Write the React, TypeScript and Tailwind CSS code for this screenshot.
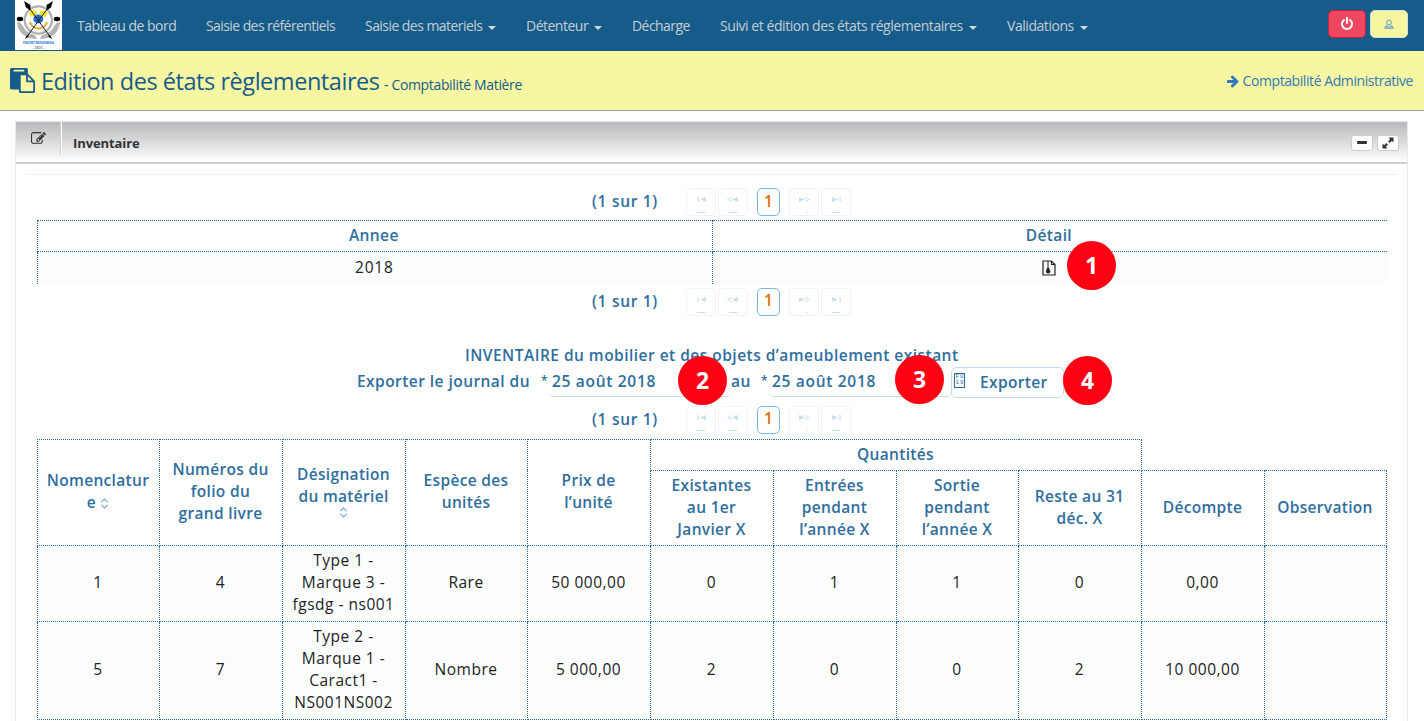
import React from "react";

const PASTE =
  "M768 1664h896v-640h-416q-40 0-68-28t-28-68v-416h-384v1152zm256-1440v-64q0-13-9.5-22.5t-22.5-9.5h-704q-13 0-22.5 9.5t-9.5 22.5v64q0 13 9.5 22.5t22.5 9.5h704q13 0 22.5-9.5t9.5-22.5zm256 672h299l-299-299v299zm512 128v672q0 40-28 68t-68 28h-960q-40 0-68-28t-28-68v-160h-544q-40 0-68-28t-28-68v-1344q0-40 28-68t68-28h1088q40 0 68 28t28 68v328q21 13 36 28l408 408q28 28 48 76t20 88z";
const POWER =
  "M1664 896q0 156-61 298t-164 245-245 164-298 61-298-61-245-164-164-245-61-298q0-182 80.5-343t226.5-270q43-32 95.5-25t83.5 50q32 42 24.5 94.5t-49.5 84.5q-98 74-151.5 181t-53.5 228q0 104 40.5 198.5t109.5 163.5 163.5 109.5 198.5 40.5 198.5-40.5 163.5-109.5 109.5-163.5 40.5-198.5q0-121-53.5-228t-151.5-181q-42-32-49.5-84.5t24.5-94.5q31-43 84-50t95 25q146 109 226.5 270t80.5 343zm-640-768v640q0 52-38 90t-90 38-90-38-38-90v-640q0-52 38-90t90-38 90 38 38 90z";
const EDIT =
  "M888 1184l116-116-152-152-116 116v56h96v96h56zm440-720q-16-16-33 1l-350 350q-17 17-1 33t33-1l350-350q17-17 1-33zm80 594v190q0 119-84.5 203.5t-203.5 84.5h-832q-119 0-203.5-84.5t-84.5-203.5v-832q0-119 84.5-203.5t203.5-84.5h832q63 0 117 25 15 7 18 23 3 17-9 29l-49 49q-14 14-32 8-23-6-45-6h-832q-66 0-113 47t-47 113v832q0 66 47 113t113 47h832q66 0 113-47t47-113v-126q0-13 9-22l64-64q15-15 35-7t20 29zm-96-738l288 288-672 672h-288v-288zm444 132l-92 92-288-288 92-92q28-28 68-28t68 28l152 152q28 28 28 68t-28 68z";
const ARROW =
  "M1600 960q0 54-37 91l-651 651q-39 37-91 37-51 0-90-37l-75-75q-38-38-38-91t38-91l293-293h-704q-52 0-84.5-37.5t-32.5-90.5v-128q0-53 32.5-90.5t84.5-37.5h704l-293-294q-38-36-38-90t38-90l75-75q38-38 90-38 53 0 91 38l651 651q37 35 37 90z";

function Glyph({ d, className }: { d: string; className: string }) {
  return (
    <svg viewBox="0 0 1792 1792" fill="currentColor" className={className}>
      <path d={d} />
    </svg>
  );
}

function Logo() {
  return (
    <svg viewBox="0 0 47 50" className="block h-[50px] w-[47px] bg-white">
      <path d="M2 22 C5 22 7 24 8.500 27 C10.500 31 14 33.500 20 35 L22 39 C12 39 3 34 2 22Z M45 22 C42 22 40 24 38.500 27 C36.500 31 33 33.500 27 35 L25 39 C35 39 44 34 45 22Z" fill="#b4b4b4" />
      <circle cx="23.300" cy="20" r="13.600" fill="#fff" stroke="#b0b0b0" strokeWidth="2.200" />
      <path d="M15 22 A8.800 8.800 0 0 0 32 22" fill="none" stroke="#e0a93c" strokeWidth="2" />
      <path d="M14 13 Q17 9 21.500 11 L22 14.500 L16 17Z M32.600 13 Q29.600 9 25 11 L24.600 14.500 L30.600 17Z" fill="#f1e51c" />
      <ellipse cx="23.300" cy="19" rx="5" ry="4.400" fill="#2a78d6" />
      <path d="M18.800 17.500h9M18.800 20.500h9M23.300 15v8" stroke="#12427d" strokeWidth=".6" />
      <path d="M12 5 L36 38 M35 5 L11 38" stroke="#222" strokeWidth="1" />
      <path d="M9 1 L15.500 5 L15.500 10.500 L11 7.500Z M38 1 L31.500 5 L31.500 10.500 L36 7.500Z M37 39l-4-2.500 2-1.500Z M10 39l4-2.500-2-1.500Z" fill="#090909" />
      <ellipse cx="5" cy="19" rx="3.200" ry="2.200" fill="#000" />
      <ellipse cx="42" cy="19" rx="3.200" ry="2.200" fill="#000" />
      <text x="23.500" y="43.900" textAnchor="middle" fontSize="3.600" fontWeight="700" fill="#3187df" fontFamily="Liberation Sans, sans-serif" textLength="31">FADINTSERANANA</text>
      <text x="23.500" y="48.600" textAnchor="middle" fontSize="3.400" fill="#333" fontFamily="Liberation Sans, sans-serif">- 1820 -</text>
    </svg>
  );
}

const NAV = [
  { label: "Tableau de bord", w: "w-[129px] tracking-[-0.5px]", caret: false },
  { label: "Saisie des référentiels", w: "w-[159px] tracking-[-0.58px]", caret: false },
  { label: "Saisie des materiels", w: "w-[161px] tracking-[-0.55px]", caret: true },
  { label: "Détenteur", w: "w-[106px] tracking-[-0.5px]", caret: true },
  { label: "Décharge", w: "w-[88px] tracking-[-0.55px]", caret: false },
  { label: "Suivi et édition des états réglementaires", w: "w-[287px] tracking-[-0.44px]", caret: true },
  { label: "Validations", w: "w-[111px] tracking-[-0.45px]", caret: true },
];

function PageButton({ kind }: { kind: "first" | "prev" | "next" | "last" }) {
  return (
    <span className="flex h-7 w-[30px] rounded-[5px] border border-[#edf3f9]">
      <svg viewBox="0 0 28 26" className="h-[26px] w-7" fill="#c9dff0" stroke="#c9dff0" strokeWidth="0">
        {kind === "first" && <path d="M10.500 8h1.200v5h-1.200z M19 8v5l-6-2.500z M10 23h8v1h-8z" />}
        {kind === "prev" && (
          <>
            <path d="M19 8v5l-6-2.500z M10 23h8v1h-8z" />
            <path d="M13 8.500L8.500 10.500l4.500 2" fill="none" strokeWidth="1" />
          </>
        )}
        {kind === "next" && (
          <>
            <path d="M9 8v5l6-2.500z M17 23h1v1h-1z" />
            <path d="M15 8.500L19.500 10.500l-4.500 2" fill="none" strokeWidth="1" />
          </>
        )}
        {kind === "last" && <path d="M10 8v5l6-2.500z M17.500 8h1.200v5h-1.200z M10 23h8v1h-8z" />}
      </svg>
    </span>
  );
}

function Paginator() {
  return (
    <div className="ml-[576px] flex h-7 items-center">
      <span className="w-[94px] whitespace-nowrap text-[15.500px] font-semibold tracking-[0.700px] text-[#2e6e9e]">(1 sur 1)</span>
      <PageButton kind="first" />
      <span className="w-0.5" />
      <PageButton kind="prev" />
      <span className="mx-[9px] flex h-7 w-[23px] items-center justify-center rounded-[5px] border border-[#79b7e7] pb-px text-[15.500px] font-semibold text-[#e17009]">
        1
      </span>
      <PageButton kind="next" />
      <span className="w-0.5" />
      <PageButton kind="last" />
    </div>
  );
}

function Sorter() {
  return (
    <svg viewBox="0 0 10 12" className="inline-block h-[11px] w-[9px]" fill="none" stroke="#6fa8d2" strokeWidth="1.200">
      <path d="M1.500 4.500L5 1l3.500 3.500M1.500 7.500L5 11l3.500-3.500" />
    </svg>
  );
}

function Lines({ lines }: { lines: string[] }) {
  return (
    <>
      {lines.map((l) => (
        <span key={l} className="block whitespace-nowrap">
          {l}
        </span>
      ))}
    </>
  );
}

const TH = "border border-dotted border-[#2e6e9e] pb-[2px] pl-0 pr-px pt-0 text-center align-middle font-semibold tracking-[0.320px] text-[#2e6e9e]";
const TD = "border border-dotted border-[#2e6e9e] bg-[#fcfefe] pb-[2px] pl-0 pr-px pt-0 text-center align-middle tracking-[0.500px] text-[#222]";

const COLS = ["w-[122px]", "w-[123px]", "w-[123px]", "w-[122px]", "w-[123px]", "w-[123px]", "w-[123px]", "w-[122px]", "w-[123px]", "w-[123px]", "w-[122px]"];

const ROWS: { h: string; cells: string[][] }[] = [
  { h: "h-[76px]", cells: [["1"], ["4"], ["Type 1 -", "Marque 3 -", "fgsdg - ns001"], ["Rare"], ["50 000,00"], ["0"], ["1"], ["1"], ["0"], ["0,00"], []] },
  { h: "h-[98px]", cells: [["5"], ["7"], ["Type 2 -", "Marque 1 -", "Caract1 -", "NS001NS002"], ["Nombre"], ["5 000,00"], ["2"], ["0"], ["0"], ["2"], ["10 000,00"], []] },
];

function Badge({ n, at }: { n: string; at: string }) {
  return (
    <span className={`absolute flex h-[49px] w-[49px] items-center justify-center rounded-full bg-[#fe0013] font-['Open_Sans',sans-serif] text-[23px] font-bold text-white ${at}`}>
      {n}
    </span>
  );
}

export default function App() {
  return (
    <div className="relative h-[721px] w-[1424px] overflow-hidden bg-white font-['Open_Sans','Noto_Sans',sans-serif]">
      <header className="flex h-[51px] bg-[#155c8b] pl-[15px]">
        <Logo />
        <nav className="flex">
          {NAV.map((n) => (
            <a key={n.label} className={`flex h-[51px] items-center whitespace-nowrap pl-[15px] text-[14px] text-[#c5cdd2] ${n.w}`}>
              {n.label}
              {n.caret && <span className="ml-[6px] mt-[4px] border-x-4 border-t-4 border-x-transparent border-t-[#d0d6da]" />}
            </a>
          ))}
        </nav>
        <div className="ml-auto mr-4 mt-[10px] flex gap-1">
          <span className="flex h-7 w-[38px] items-center justify-center rounded-[5px] border border-[#c8213f] bg-[#ee4760] text-white">
            <Glyph d={POWER} className="h-[14px] w-[14px]" />
          </span>
          <span className="flex h-7 w-[38px] items-center justify-center rounded-[5px] border border-[#d5e3d0] bg-[#f7f6a3]">
            <svg viewBox="0 0 10 10" className="h-[10px] w-[10px]" fill="none" stroke="#5c9fca">
              <circle cx="5" cy="3.500" r="2.400" />
              <path d="M3.500 6L1 8h8L6.500 6M0 9.200h10" />
            </svg>
          </span>
        </div>
      </header>

      <div className="flex h-[60px] items-center border-b border-[#a3a3a3] bg-[#f7f6a3] pl-[10px] pr-[11px] text-[#155c8b]">
        <Glyph d={PASTE} className="h-[25px] w-[25px]" />
        <h1 className="ml-[6px] w-[343px] whitespace-nowrap text-[23.500px] leading-[58px] tracking-[-0.450px]">Edition des états règlementaires</h1>
        <span className="mt-[7px] whitespace-nowrap text-[14px] tracking-[-0.350px]">- Comptabilité Matière</span>
        <a className="ml-auto flex items-center gap-[3px] whitespace-nowrap text-[14px] tracking-[-0.420px] text-[#337ab7]">
          <Glyph d={ARROW} className="h-[14px] w-[14px]" />
          Comptabilité Administrative
        </a>
      </div>

      <section className="ml-[15px] mt-[10px] h-[620px] w-[1393px] border border-[#e9e9e9] bg-white">
        <div className="flex h-[42px] items-start border-b-2 border-[#cfcfcf] bg-gradient-to-b from-[#b8b9bc] to-white">
          <div className="flex h-[34px] w-[46px] justify-center border-r border-[#fff] pt-[9px] text-[#333] shadow-[inset_-1px_0_0_#d0d0d0]">
            <Glyph d={EDIT} className="h-[15px] w-[15px]" />
          </div>
          <h2 className="ml-[11px] mt-[11px] text-[13px] font-bold leading-5 tracking-[-0.1px] text-[#333]">Inventaire</h2>
          <div className="ml-auto mr-2 mt-[13px] flex gap-1">
            <span className="flex h-4 w-[22px] items-center justify-center rounded-[3px] border border-[#ccc] bg-white">
              <span className="mb-px h-[3px] w-[10px] rounded-[1px] bg-[#333]" />
            </span>
            <span className="flex h-4 w-[22px] items-center justify-center rounded-[3px] border border-[#ccc] bg-white">
              <svg viewBox="0 0 12 12" className="h-3 w-3" fill="#333">
                <path d="M6.500 0.500H11.500v5L9.800 3.800 7.700 5.900 6.100 4.300 8.200 2.200z M5.500 11.500H0.500V6.500L2.200 8.200 4.300 6.100 5.900 7.700 3.800 9.800z" />
              </svg>
            </span>
          </div>
        </div>

        <div className="ml-[9px] mr-[10px] mt-[10px] border-t border-[#eee]" />

        <div className="mt-[13px]">
          <Paginator />
        </div>

        <table className="ml-[21px] mt-1 w-[1350px] table-fixed border-collapse text-[15.500px] leading-[22px]">
          <thead>
            <tr className="h-[31px]">
              <th className="border border-dotted border-[#2e6e9e] pb-[2px] pl-0 pr-[2px] pt-0 font-semibold tracking-[0.400px] text-[#2e6e9e]">Annee</th>
              <th className="border-y border-dotted border-[#2e6e9e] pb-[2px] pl-0 pr-[2px] pt-0 font-semibold tracking-[0.400px] text-[#2e6e9e]">Détail</th>
            </tr>
          </thead>
          <tbody>
            <tr className="h-[32px] bg-[#fcfefe]">
              <td className="border-x border-dotted border-[#2e6e9e] pb-[2px] pl-0 pr-px pt-0 text-center tracking-[0.800px] text-[#222]">2018</td>
              <td className="py-0 pl-0 pr-[2px]">
                <svg viewBox="0 0 14 16" className="mx-auto block h-4 w-[14px]" fill="none" stroke="#222" strokeWidth="1.200">
                  <path d="M1 1h8.500L13 4.500V15H1zM9.500 1v3.500H13" />
                  <path d="M6 1.500v7" strokeWidth="2" strokeDasharray="1 1" />
                  <path d="M5.300 8h1.600l1.200 3.500q0 1.800-2 1.800t-2-1.800z" fill="#222" strokeWidth=".5" />
                </svg>
              </td>
            </tr>
          </tbody>
        </table>

        <div className="mt-[4px]">
          <Paginator />
        </div>

        <p className="mt-[28px] pl-[449px] text-[15.500px] font-semibold leading-[22px] tracking-[0.480px] text-[#2e6e9e]">
          <span className="whitespace-nowrap">INVENTAIRE du mobilier et des objets d’ameublement existant</span>
        </p>
        <div className="flex h-[32px] items-start whitespace-nowrap pl-[341px] text-[15.500px] font-semibold leading-[30px] tracking-[0.450px] text-[#2e6e9e]">
          <span className="w-[184px]">Exporter le journal du</span>
          <span className="w-[8px] text-[12px]">*</span>
          <span className="h-[31px] w-[182px] rounded-[5px] border-b border-[#c5dbec] pl-[3px] tracking-[0.700px]">25 août 2018</span>
          <span className="w-[30px]">au</span>
          <span className="w-[8px] text-[12px]">*</span>
          <span className="h-[31px] w-[182px] rounded-[5px] border-b border-[#c5dbec] pl-[3px] tracking-[0.700px]">25 août 2018</span>
          <button className="mt-[1px] flex h-[31px] w-[113px] items-start rounded-[5px] border border-[#c5dbec] pl-[2px] leading-[29px] tracking-[0.350px]">
            <span className="mt-[5px] grid h-[15px] w-[11px] grid-cols-2 border border-[#2e6e9e] text-center font-['Liberation_Mono',monospace] text-[6px] font-normal leading-[6.500px] tracking-normal">
              <span>F</span>
              <span>0</span>
              <span>1</span>
              <span>9</span>
            </span>
            <span className="ml-[15px]">Exporter</span>
          </button>
        </div>

        <div className="mt-2">
          <Paginator />
        </div>

        <table className="ml-[21px] mt-[5px] w-[1349px] table-fixed border-collapse text-[15.500px] leading-[22px]">
          <colgroup>
            {COLS.map((c, i) => (
              <col key={i} className={c} />
            ))}
          </colgroup>
          <thead>
            <tr className="h-[31px]">
              <th rowSpan={2} className={TH}>
                <span className="block">Nomenclatur</span>
                <span className="block">
                  e <Sorter />
                </span>
              </th>
              <th rowSpan={2} className={TH}>
                <Lines lines={["Numéros du", "folio du", "grand livre"]} />
              </th>
              <th rowSpan={2} className={TH}>
                <Lines lines={["Désignation", "du matériel"]} />
                <span className="flex h-3 items-start justify-center pb-1">
                  <Sorter />
                </span>
              </th>
              <th rowSpan={2} className={TH}>
                <Lines lines={["Espèce des", "unités"]} />
              </th>
              <th rowSpan={2} className={TH}>
                <Lines lines={["Prix de", "l’unité"]} />
              </th>
              <th colSpan={4} className={TH}>
                Quantités
              </th>
              <th className="p-0" />
              <th className="p-0" />
            </tr>
            <tr className="h-[75px]">
              <th className={TH}>
                <Lines lines={["Existantes", "au 1er", "Janvier X"]} />
              </th>
              <th className={TH}>
                <Lines lines={["Entrées", "pendant", "l’année X"]} />
              </th>
              <th className={TH}>
                <Lines lines={["Sortie", "pendant", "l’année X"]} />
              </th>
              <th className={TH}>
                <Lines lines={["Reste au 31", "déc. X"]} />
              </th>
              <th className={TH}>Décompte</th>
              <th className={TH}>Observation</th>
            </tr>
          </thead>
          <tbody>
            {ROWS.map((r) => (
              <tr key={r.h} className={r.h}>
                {r.cells.map((c, i) => (
                  <td key={i} className={TD}>
                    <Lines lines={c} />
                  </td>
                ))}
              </tr>
            ))}
          </tbody>
        </table>
      </section>

      <Badge n="1" at="left-[1067px] top-[241px]" />
      <Badge n="2" at="left-[678px] top-[356px]" />
      <Badge n="3" at="left-[895px] top-[355px]" />
      <Badge n="4" at="left-[1063px] top-[356px]" />
    </div>
  );
}
